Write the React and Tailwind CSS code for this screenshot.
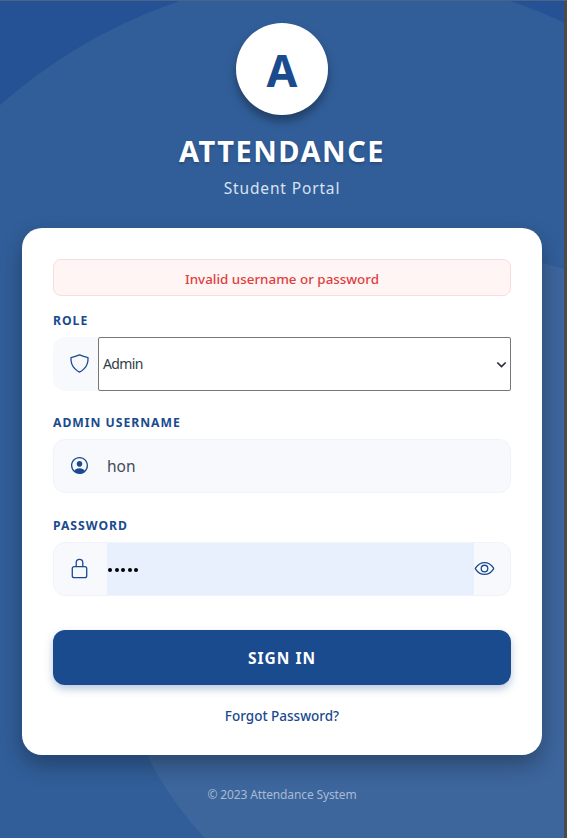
import React from "react";

function Field({ label, className, children }) {
  return (
    <div className={className}>
      <div className="h-[18px] text-[12.2px] leading-[18px] font-bold tracking-[0.98px] text-[#1a4b8e]">{label}</div>
      {children}
    </div>
  );
}

export default function App() {
  return (
    <div className="relative flex h-[838px] w-[567px] overflow-hidden border-t border-[#4c628b] bg-[#255295] font-['Noto_Sans','Open_Sans',sans-serif]">
      <svg className="absolute left-0 top-[-1px]" width="567" height="838">
        <circle cx="345" cy="493" r="519" fill="#315e99" />
        <circle cx="458" cy="600" r="347.5" fill="#3d669d" />
      </svg>

      <main className="relative flex w-[564px] flex-col items-center">
        <div className="mt-[22px] flex h-[92px] w-[92px] items-center justify-center rounded-full bg-white shadow-[0_6px_10px_rgba(0,0,0,0.35)]">
          <span className="relative top-[1px] text-[44.5px] leading-none font-bold text-[#1a4b8e]">A</span>
        </div>
        <h1 className="mt-[16px] h-10 whitespace-nowrap text-[29px] leading-10 font-bold tracking-[1.5px] text-white [text-shadow:0_2px_3px_rgba(0,0,0,0.2)]">ATTENDANCE</h1>
        <div className="mt-[5px] h-6 whitespace-nowrap text-[15.5px] leading-6 tracking-[0.85px] text-[#d8e2f2]">Student Portal</div>

        <section className="mt-[28px] flex h-[527px] w-[520px] flex-col rounded-[20px] bg-white px-[31px] pt-[31px] shadow-[0_10px_22px_rgba(0,0,0,0.3)]">
          <div className="flex h-[37px] items-center justify-center rounded-[8px] border border-[#fbdcdc] bg-[#fff5f5] pt-[3px] text-[13.4px] font-medium text-[#e03e40]">
            Invalid username or password
          </div>

          <Field label="ROLE" className="mt-[16px]">
            <div className="mt-[7px] flex h-[54px] rounded-[12px] bg-[#f7f9fd]">
              <div className="flex w-[45px] items-center pb-[2px] pl-[16px]">
                <svg width="21" height="21" viewBox="0 0 512 512" fill="none" stroke="#1a4b8e" strokeWidth="32" strokeLinecap="round" strokeLinejoin="round">
                  <path d="M463.1 112.37C373.68 96.33 336.71 84.45 256 48c-80.71 36.45-117.68 48.33-207.1 64.37C32.7 369.13 240.58 457.79 256 464c15.42-6.21 223.3-94.87 207.1-351.63Z" />
                </svg>
              </div>
              <div className="flex flex-1 items-center justify-between rounded-[2px] border border-[#767676] bg-white pr-[3px] pl-1 text-[14px] text-[#333c4a]">
                <span className="relative top-[-1px] tracking-[-0.6px]">Admin</span>
                <svg width="11" height="11" viewBox="0 0 11 11" fill="none" stroke="#2b2b3b" strokeWidth="1.7">
                  <path d="M1.3 3.5 5.5 7.6 9.7 3.5" />
                </svg>
              </div>
            </div>
          </Field>

          <Field label="ADMIN USERNAME" className="mt-[23px]">
            <div className="mt-[7px] flex h-[54px] items-center rounded-[12px] border border-[#f0f3f8] bg-[#f7f9fd] pl-[15px]">
              <svg className="mb-[2px]" width="21" height="21" viewBox="0 0 512 512" fill="#1a4b8e">
                <path d="M258.9 48C141.92 46.42 46.42 141.92 48 258.9c1.56 112.19 92.91 203.54 205.1 205.1 117 1.6 212.48-93.9 210.88-210.88C462.44 140.91 371.09 49.56 258.9 48Zm126.42 327.25a4 4 0 0 1-6.14-.32 124.27 124.27 0 0 0-32.35-29.59C321.37 329 289.11 320 256 320s-65.37 9-90.83 25.34a124.24 124.24 0 0 0-32.35 29.58 4 4 0 0 1-6.14.32A175.32 175.32 0 0 1 80 259c-1.63-97.31 78.22-178.76 175.57-179S432 158.81 432 256a175.32 175.32 0 0 1-46.68 119.25Z" />
                <path d="M256 144c-19.72 0-37.55 7.39-50.22 20.82s-19 32-17.57 51.93C191.11 256 221.52 288 256 288s64.83-32 67.79-71.24c1.48-19.74-4.8-38.14-17.68-51.82C293.39 151.44 275.59 144 256 144Z" />
              </svg>
              <span className="ml-[17px] pt-[2px] text-[15.5px] text-[#414b59]">hon</span>
            </div>
          </Field>

          <Field label="PASSWORD" className="mt-[24px]">
            <div className="mt-[7px] flex h-[54px] overflow-hidden rounded-[12px] border border-[#f0f3f8] bg-[#f7f9fd]">
              <div className="flex w-[53px] items-center pl-[15px]">
                <svg className="mb-[2px]" width="21" height="21" viewBox="0 0 512 512" fill="none" stroke="#1a4b8e" strokeWidth="32" strokeLinecap="round" strokeLinejoin="round">
                  <path d="M336 208v-95a80 80 0 0 0-160 0v95" />
                  <rect x="80" y="208" width="352" height="272" rx="48" />
                </svg>
              </div>
              <div className="flex w-[367px] items-center gap-[2.6px] bg-[#e8effd] pt-[2px] pl-[1px]">
                {[0, 1, 2, 3, 4].map((i) => (
                  <i key={i} className="h-[4px] w-[4px] rounded-full bg-black" />
                ))}
              </div>
              <div className="flex flex-1 items-center">
                <svg className="mb-[2px]" width="21" height="21" viewBox="0 0 512 512" fill="none" stroke="#1a4b8e" strokeWidth="32" strokeLinecap="round" strokeLinejoin="round">
                  <path d="M255.66 112c-77.94 0-157.89 45.11-220.83 135.33a16 16 0 0 0-.27 17.77C82.92 340.8 161.8 400 255.66 400c92.84 0 173.34-59.38 221.79-135.25a16.14 16.14 0 0 0 0-17.47C428.89 172.28 347.8 112 255.66 112Z" />
                  <circle cx="256" cy="256" r="80" />
                </svg>
              </div>
            </div>
          </Field>

          <button className="mt-[34px] h-[55px] shrink-0 rounded-[12px] bg-[#1a4b8e] pt-[3px] text-[15.5px] font-bold tracking-[1px] text-white shadow-[0_4px_8px_rgba(26,75,142,0.3)]">SIGN IN</button>
          <div className="mt-[21px] text-center text-[13.5px] leading-5 font-medium text-[#1a4b8e]">Forgot Password?</div>
        </section>

        <footer className="mt-[30px] whitespace-nowrap text-[12px] leading-5 tracking-[-0.13px] text-[#a8bad4]">© 2023 Attendance System</footer>
      </main>
      <div className="relative w-[3px] bg-[#4b4b4d]" />
    </div>
  );
}
